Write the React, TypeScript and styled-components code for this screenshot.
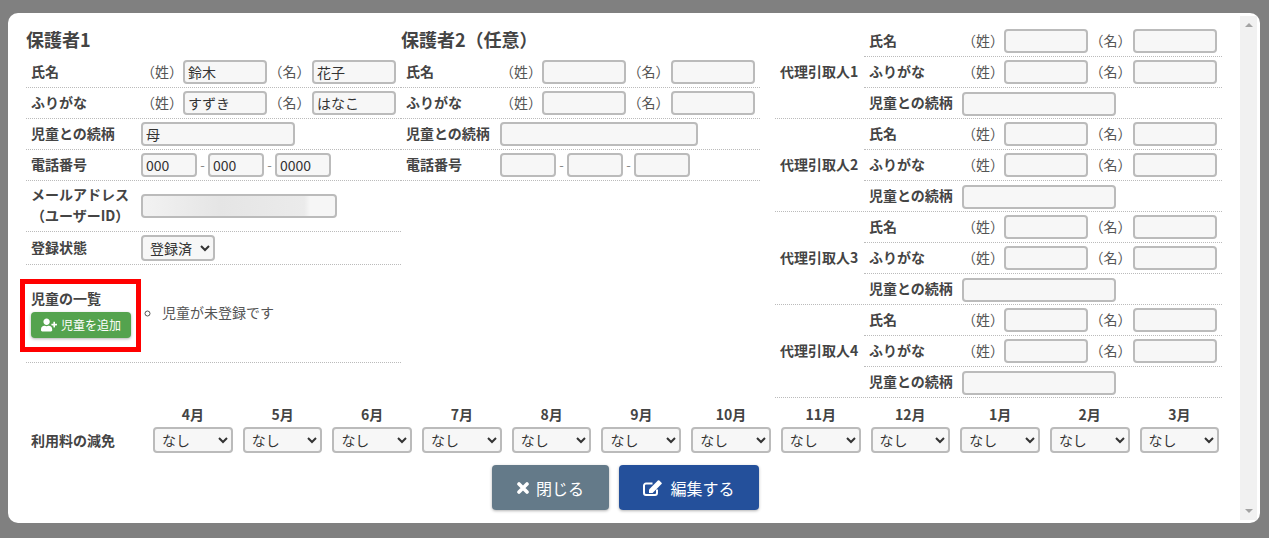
import * as React from 'react';
import styled, { createGlobalStyle } from 'styled-components';
import { FaUserPlus } from 'react-icons/fa';

const GlobalStyle = createGlobalStyle`
  html, body {
    margin: 0;
    height: 538px;
    overflow: hidden;
    background: #808080;
    font-family: 'Noto Sans CJK JP', 'Noto Sans', sans-serif;
    font-size: 14px;
    color: #444;
  }
`;

const Overlay = styled.div`
  height: 538px;
  padding: 13px 9px 15px 8px;
  box-sizing: border-box;
`;

const Dialog = styled.div`
  display: flex;
  height: 510px;
  background: #fff;
  border-radius: 10px;
  overflow: hidden;
`;

const Body = styled.div`
  flex: 1;
  padding: 13px 18px 0 18px;
  min-width: 0;
`;

const Scrollbar = styled.div`
  width: 17px;
  margin: 3px 3px 3px 0;
  background: #f1f1f1;
  display: flex;
  flex-direction: column;
  justify-content: space-between;
  align-items: center;
  padding: 7px 0;
  box-sizing: border-box;
`;

const Arrow = styled.span<{ $down?: boolean }>`
  width: 0;
  height: 0;
  border-left: 4px solid transparent;
  border-right: 4px solid transparent;
  ${(p) => (p.$down ? 'border-top: 4px solid #a3a3a3;' : 'border-bottom: 4px solid #a3a3a3;')}
`;

const Columns = styled.div`
  display: grid;
  grid-template-columns: 375px 374px 447px;
  height: 374px;
`;

const GuardianTwo = styled.div`
  padding-right: 15px;
`;

const Heading = styled.h3`
  margin: 0;
  height: 31px;
  font-size: 18px;
  line-height: 26px;
  font-weight: 700;
  color: #444;
`;

const Row = styled.div<{ $height?: number }>`
  display: flex;
  align-items: center;
  height: ${(p) => p.$height ?? 31}px;
  box-sizing: border-box;
  border-bottom: 1px dotted #bbb;
  padding-left: 5px;
`;

const Label = styled.div<{ $width: number }>`
  width: ${(p) => p.$width}px;
  flex: none;
  box-sizing: border-box;
  padding-bottom: 2px;
  font-weight: 700;
  line-height: 21px;
  color: #444;
`;

const CenterLabel = styled(Label)`
  text-align: center;
  padding-right: 12px;
  white-space: nowrap;
`;

const Affix = styled.span<{ $width: number }>`
  width: ${(p) => p.$width}px;
  flex: none;
  padding-bottom: 2px;
  text-align: center;
  color: #555;
`;

const Dash = styled(Affix)`
  color: #888;
  font-size: 13px;
`;

const Field = styled.input<{ $width: number }>`
  width: ${(p) => p.$width}px;
  height: 24px;
  flex: none;
  box-sizing: border-box;
  padding: 0 3px;
  border: 2px solid #bbb;
  border-radius: 4px;
  background: #f7f7f7;
  font: inherit;
  color: #333;
  outline: none;
`;

const BlurField = styled(Field)`
  background: linear-gradient(90deg, #f2f2f2 0%, #e5e5e5 40%, #ebebeb 84%, #f6f6f6 87%);
`;

const Select = styled.select<{ $width?: number }>`
  width: ${(p) => (p.$width ? `${p.$width}px` : '100%')};
  height: 26px;
  box-sizing: border-box;
  border: 2px solid #bbb;
  border-radius: 4px;
  background: #f7f7f7;
  font: inherit;
  color: #333;
  padding: 0 0 0 3px;
  outline: none;
`;

const ChildRow = styled(Row)`
  height: 98px;
  align-items: flex-start;
`;

const ChildHead = styled.div`
  position: relative;
  width: 100px;
  flex: none;
  padding-top: 23px;
`;

const ChildTitle = styled.div`
  font-weight: 700;
  line-height: 20px;
  margin-bottom: 4px;
`;

const Highlight = styled.div`
  position: absolute;
  left: -11px;
  top: 14px;
  width: 121px;
  height: 73px;
  box-sizing: border-box;
  border: 5px solid #f00;
  pointer-events: none;
`;

const AddButton = styled.button`
  display: flex;
  align-items: center;
  justify-content: center;
  gap: 4px;
  width: 100px;
  height: 26px;
  padding: 0 0 1px;
  border: none;
  border-radius: 4px;
  background: #54a34e;
  color: #fff;
  font: inherit;
  font-size: 12px;
  box-shadow: 0 1px 3px rgba(0, 0, 0, 0.3);
`;

const ChildList = styled.ul`
  margin: 37px 0 0;
  padding: 0 0 0 31px;
  list-style: circle;
  line-height: 20px;
  color: #555;
`;

const GroupRow = styled.div`
  display: flex;
  align-items: center;
  height: 93px;
  box-sizing: border-box;
  border-bottom: 1px dotted #bbb;
  padding-left: 5px;
`;

const GroupLabel = styled(Label)`
  white-space: nowrap;
`;

const GroupBody = styled.div`
  flex: 1;
  align-self: stretch;
  min-width: 0;
`;

const InnerRow = styled(Row)`
  &:last-child {
    border-bottom: none;
  }
`;

const Fees = styled.div`
  display: grid;
  grid-template-columns: 112px repeat(12, 79.7px);
  column-gap: 10px;
  align-items: center;
  padding-left: 5px;
  margin-top: 4px;
`;

const FeeTitle = styled.div`
  font-weight: 700;
  margin-right: -10px;
  line-height: 26px;
`;

const Month = styled.div`
  text-align: center;
  font-weight: 700;
  height: 23px;
  line-height: 21px;
`;

const Actions = styled.div`
  display: flex;
  justify-content: center;
  gap: 10px;
  margin-top: 12px;
  padding-left: 3px;
`;

const ActionButton = styled.button<{ $color: string; $width: number; $gap: number }>`
  display: flex;
  align-items: center;
  justify-content: center;
  gap: ${(p) => p.$gap}px;
  width: ${(p) => p.$width}px;
  height: 45px;
  padding: 0;
  border: none;
  border-radius: 4px;
  background: ${(p) => p.$color};
  color: #fff;
  font: inherit;
  font-size: 16px;
  box-shadow: 0 1px 3px rgba(0, 0, 0, 0.3);
`;

const months = ['4月', '5月', '6月', '7月', '8月', '9月', '10月', '11月', '12月', '1月', '2月', '3月'];

const CloseIcon = () => (
  <svg width="12" height="12" viewBox="0 0 12 12" fill="none" stroke="currentColor" strokeWidth="3.6" strokeLinecap="round">
    <path d="M2 2l8 8M10 2l-8 8" />
  </svg>
);

const EditIcon = () => (
  <svg width="19" height="16" viewBox="0 0 19 16" fill="none">
    <path d="M9.5 3.5H3a2 2 0 0 0-2 2V13a2 2 0 0 0 2 2h9a2 2 0 0 0 2-2V9.5" stroke="currentColor" strokeWidth="2" />
    <path d="M6 9.4 14.9.5a1 1 0 0 1 1.4 0l2.2 2.2a1 1 0 0 1 0 1.4L9.6 13 6 13z" fill="currentColor" />
  </svg>
);

interface INameRow {
  label: string;
  labelWidth: number;
  sei?: string;
  mei?: string;
}

const NameRow = ({ label, labelWidth, sei = '', mei = '' }: INameRow) => (
  <Row>
    <Label $width={labelWidth}>{label}</Label>
    <Affix $width={42}>（姓）</Affix>
    <Field $width={84} defaultValue={sei} />
    <Affix $width={45}>（名）</Affix>
    <Field $width={84} defaultValue={mei} />
  </Row>
);

const Phone = ({ values = ['', '', ''] }: { values?: string[] }) => (
  <>
    <Field $width={56} defaultValue={values[0]} />
    <Dash $width={11}>-</Dash>
    <Field $width={56} defaultValue={values[1]} />
    <Dash $width={11}>-</Dash>
    <Field $width={56} defaultValue={values[2]} />
  </>
);

const ProxyGroup = ({ index }: { index: number }) => (
  <GroupRow>
    <GroupLabel $width={84}>代理引取人{index}</GroupLabel>
    <GroupBody>
      <NameRow label="氏名" labelWidth={93} />
      <NameRow label="ふりがな" labelWidth={93} />
      <InnerRow>
        <Label $width={93}>児童との続柄</Label>
        <Field $width={154} />
      </InnerRow>
    </GroupBody>
  </GroupRow>
);

export default function App() {
  return (
    <>
      <GlobalStyle />
      <Overlay>
        <Dialog>
          <Body>
            <Columns>
              <div>
                <Heading>保護者1</Heading>
                <NameRow label="氏名" labelWidth={110} sei="鈴木" mei="花子" />
                <NameRow label="ふりがな" labelWidth={110} sei="すずき" mei="はなこ" />
                <Row>
                  <Label $width={110}>児童との続柄</Label>
                  <Field $width={154} defaultValue="母" />
                </Row>
                <Row>
                  <Label $width={110}>電話番号</Label>
                  <Phone values={['000', '000', '0000']} />
                </Row>
                <Row $height={51}>
                  <CenterLabel $width={110}>
                    メールアドレス
                    <br />
                    （ユーザーID）
                  </CenterLabel>
                  <BlurField $width={196} />
                </Row>
                <Row $height={33}>
                  <Label $width={110}>登録状態</Label>
                  <Select $width={74} defaultValue="登録済">
                    <option>登録済</option>
                  </Select>
                </Row>
                <ChildRow>
                  <ChildHead>
                    <Highlight />
                    <ChildTitle>児童の一覧</ChildTitle>
                    <AddButton>
                      <FaUserPlus size={16} />
                      児童を追加
                    </AddButton>
                  </ChildHead>
                  <ChildList>
                    <li>児童が未登録です</li>
                  </ChildList>
                </ChildRow>
              </div>
              <GuardianTwo>
                <Heading>保護者2（任意）</Heading>
                <NameRow label="氏名" labelWidth={94} />
                <NameRow label="ふりがな" labelWidth={94} />
                <Row>
                  <Label $width={94}>児童との続柄</Label>
                  <Field $width={198} />
                </Row>
                <Row>
                  <Label $width={94}>電話番号</Label>
                  <Phone />
                </Row>
              </GuardianTwo>
              <div>
                {[1, 2, 3, 4].map((i) => (
                  <ProxyGroup key={i} index={i} />
                ))}
              </div>
            </Columns>
            <Fees>
              <div />
              {months.map((m) => (
                <Month key={m}>{m}</Month>
              ))}
              <FeeTitle>利用料の減免</FeeTitle>
              {months.map((m) => (
                <Select key={m} defaultValue="なし">
                  <option>なし</option>
                </Select>
              ))}
            </Fees>
            <Actions>
              <ActionButton $color="#647a89" $width={117} $gap={7}>
                <CloseIcon />
                閉じる
              </ActionButton>
              <ActionButton $color="#24509b" $width={140} $gap={8}>
                <EditIcon />
                編集する
              </ActionButton>
            </Actions>
          </Body>
          <Scrollbar>
            <Arrow />
            <Arrow $down />
          </Scrollbar>
        </Dialog>
      </Overlay>
    </>
  );
}
